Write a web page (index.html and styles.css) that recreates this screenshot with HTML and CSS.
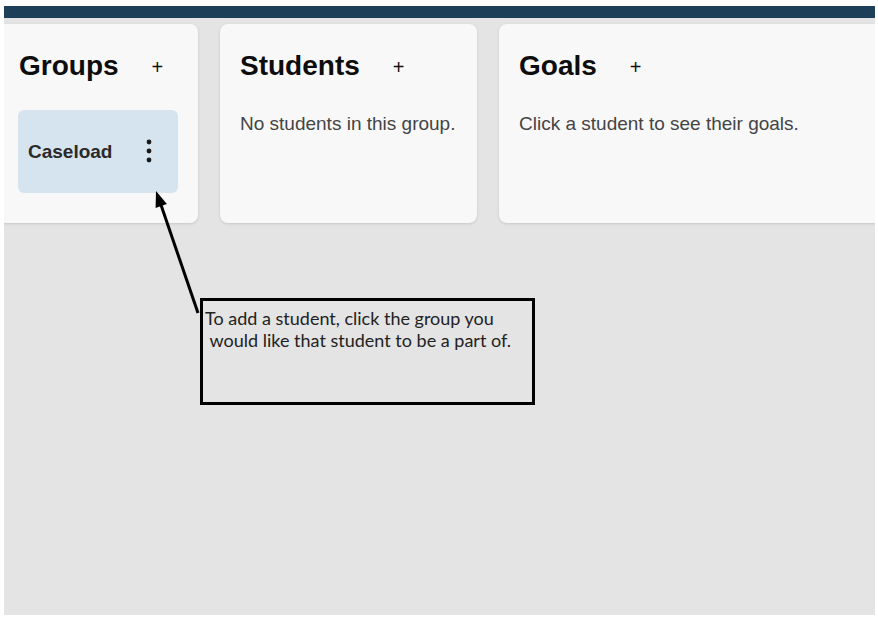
FILE: index.html
```html
<!DOCTYPE html>
<html>
<head>
<meta charset="utf-8">
<link rel="stylesheet" href="styles.css">
</head>
<body>
<div class="frame">
  <div class="topbar"></div>
  <div class="columns">
    <section class="card card-groups">
      <div class="title-row">
        <h2>Groups</h2>
        <span class="plus">+</span>
      </div>
      <div class="group-item">
        <span class="group-name">Caseload</span>
        <svg class="kebab" width="6" height="24" viewBox="0 0 6 24"><circle cx="3" cy="3" r="2.4"/><circle cx="3" cy="12" r="2.4"/><circle cx="3" cy="21" r="2.4"/></svg>
      </div>
    </section>
    <section class="card card-students">
      <div class="title-row">
        <h2>Students</h2>
        <span class="plus">+</span>
      </div>
      <p class="empty">No students in this group.</p>
    </section>
    <section class="card card-goals">
      <div class="title-row">
        <h2>Goals</h2>
        <span class="plus">+</span>
      </div>
      <p class="empty">Click a student to see their goals.</p>
    </section>
  </div>
  <div class="note">To add a student, click the group you
 would like that student to be a part of.</div>
  <svg class="arrow" width="878" height="617" viewBox="0 0 878 617">
    <line x1="198" y1="313" x2="160" y2="202" stroke="#000" stroke-width="3"/>
    <polygon points="156,191 166.9,204.1 155.6,208.1" fill="#000"/>
  </svg>
</div>
</body>
</html>
```

FILE: styles.css
```css
* { box-sizing: border-box; }
html, body { margin: 0; padding: 0; background: #ffffff; }
body { font-family: "Liberation Sans", Arial, sans-serif; }

.frame {
  position: relative;
  margin: 6px 0 0 4px;
  width: 871px;
  height: 609px;
  background: #e4e4e4;
  overflow: hidden;
}

.topbar {
  height: 12px;
  background: #1d3f58;
}

.columns {
  display: flex;
  gap: 22px;
  margin-top: 6px;
  margin-left: -6px;
}

.card {
  flex: none;
  height: 199px;
  padding: 26px 20px 20px;
  background: #f8f8f9;
  border-radius: 8px;
  box-shadow: 0 1px 3px rgba(0, 0, 0, 0.13);
}
.card-groups { width: 200px; padding-left: 21px; padding-right: 20px; }
.card-students { width: 257px; }
.card-goals { width: 440px; padding-left: 20px; }

.title-row {
  display: flex;
  align-items: center;
  height: 32px;
  margin-bottom: 28px;
}
.title-row h2 {
  margin: 0;
  font-size: 28px;
  line-height: 32px;
  font-weight: 700;
  color: #0d0d0d;
}
.plus {
  margin-left: 33px;
  font-size: 20px;
  color: #111;
  line-height: 1;
  padding-top: 2px;
}

.group-item {
  width: 160px;
  height: 83px;
  margin-left: -1px;
  display: flex;
  align-items: center;
  justify-content: space-between;
  padding: 0 26px 0 10px;
  background: #d6e4f0;
  border-radius: 6px;
}
.group-name {
  font-size: 19px;
  font-weight: 700;
  color: #2a2a2a;
}
.kebab { fill: #1a1a1a; margin-top: -2px; }

.empty {
  margin: 0;
  padding-top: 3px;
  font-size: 19px;
  color: #444;
}

.note {
  position: absolute;
  left: 196px;
  top: 292px;
  width: 335px;
  height: 107px;
  border: 3px solid #000;
  padding: 6px 2px 0;
  font-family: Lato, "Open Sans", sans-serif;
  font-size: 18px;
  line-height: 22px;
  color: #222;
  white-space: pre-wrap;
}

.arrow {
  position: absolute;
  left: -4px;
  top: -6px;
  pointer-events: none;
}
```
